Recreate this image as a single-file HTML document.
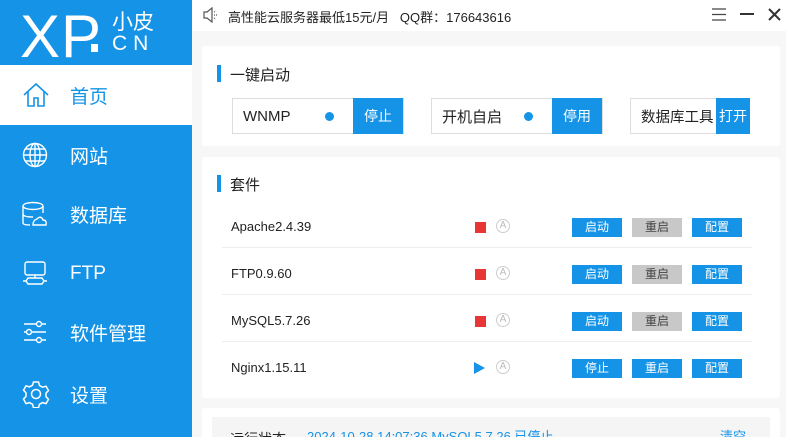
<!DOCTYPE html>
<html><head><meta charset="utf-8"><style>
*{margin:0;padding:0;box-sizing:border-box}
html,body{width:786px;height:437px;overflow:hidden}
body{background:#f7f7f7;font-family:"Liberation Sans","Noto Sans CJK SC",sans-serif;position:relative}
.sb{position:absolute;left:0;top:0;width:192px;height:437px;background:#1593e6;color:#fff}
.abs{position:absolute}
.nav{position:absolute;left:0;width:192px;height:60px;display:flex;align-items:center;font-size:19px;color:#fff}
.nav svg{position:absolute;left:22px}
.nav span{position:absolute;left:70px}
.top{position:absolute;left:192px;top:0;width:594px;height:31px;background:#fff;font-size:13px;color:#222}
.card{position:absolute;background:#fff;border-radius:3px;overflow:hidden}
.ttl{position:absolute;font-size:15px;color:#222}
.ttl:before{content:"";position:absolute;left:-13px;top:1px;width:4px;height:17px;background:#1593e6}
.box{position:absolute;height:36px;border:1px solid #ddd;font-size:15px;color:#222;display:flex;align-items:center;padding-left:10px;background:#fff}
.bb{position:absolute;top:-1px;height:36px;background:#1593e6;color:#fff;font-size:14px;display:flex;align-items:center;justify-content:center}
.dot{position:absolute;width:9px;height:9px;border-radius:50%;background:#1593e6;top:13px}
.row{position:absolute;left:222px;width:530px;height:47px;font-size:13px;color:#222}
.row .n{position:absolute;left:9px;top:15px}
.btn{position:absolute;top:14px;width:50px;height:19px;font-size:12px;color:#fff;background:#1593e6;text-align:center;line-height:19px}
.g{background:#c8c8c8;color:#444}
.sq{position:absolute;left:253px;top:18px;width:11px;height:11px;background:#e83636}
.a{position:absolute;left:274px;top:15px;width:14px;height:14px;border:1px solid #ccc;border-radius:50%;font-size:10px;color:#bbb;text-align:center;line-height:12px}
.line{position:absolute;left:222px;width:530px;height:1px;background:#eee}
</style></head><body>
<div class="sb">
 <div class="abs" style="left:20px;top:4px;font-size:60px;letter-spacing:1px;line-height:66px">XP</div>
 <div class="abs" style="left:91px;top:44px;width:7px;height:8px;background:#fff"></div>
 <div class="abs" style="left:112px;top:6px;font-size:21px">小皮</div>
 <div class="abs" style="left:112px;top:32px;font-size:21px;letter-spacing:6px">CN</div>
 <div class="nav" style="top:65px;height:60px;background:#fff;color:#1593e6"><svg width="28" height="28" viewBox="0 0 28 28" fill="none" stroke="#1593e6" stroke-width="1.6"><path d="M2 14 L14 3 L26 14 M6 11 V25 H12 V17 H16 V25 H22 V11"/></svg><span>首页</span></div>
 <div class="nav" style="top:125px"><svg width="26" height="26" viewBox="0 0 26 26" fill="none" stroke="#fff" stroke-width="1.4"><circle cx="13" cy="13" r="11.5"/><ellipse cx="13" cy="13" rx="5" ry="11.5"/><path d="M13 1.5V24.5M1.5 13H24.5M3 7H23M3 19H23"/></svg><span>网站</span></div>
 <div class="nav" style="top:184px"><svg width="26" height="26" viewBox="0 0 26 26" fill="none" stroke="#fff" stroke-width="1.4"><ellipse cx="11" cy="5" rx="10" ry="3.5"/><path d="M1 5V22Q1 24 8 24M1 13Q1 16 11 16 M21 5V12"/><path d="M11 24H24Q25 19 21 19Q19 14 15 18Q11 19 11 24Z"/></svg><span>数据库</span></div>
 <div class="nav" style="top:244px"><svg width="26" height="26" viewBox="0 0 26 26" fill="none" stroke="#fff" stroke-width="1.4"><rect x="3" y="1" width="20" height="13" rx="2"/><path d="M13 14V17M6 17H20L22 20L20 23H6L4 20Z M1 20H4M22 20H25"/></svg><span>FTP</span></div>
 <div class="nav" style="top:302px"><svg width="26" height="26" viewBox="0 0 26 26" fill="none" stroke="#fff" stroke-width="1.4"><path d="M2 5H14M20 5H24M2 13H4M10 13H24M2 21H14M20 21H24"/><circle cx="17" cy="5" r="2.5"/><circle cx="7" cy="13" r="2.5"/><circle cx="17" cy="21" r="2.5"/></svg><span>软件管理</span></div>
 <div class="nav" style="top:364px"><svg width="28" height="28" viewBox="0 0 28 28" fill="none" stroke="#fff" stroke-width="1.5"><path d="M11.5 2h5l1 3.5 3 1.7 3.5-1 2.5 4.3-2.5 2.6v3.6l2.5 2.6-2.5 4.3-3.5-1-3 1.7-1 3.5h-5l-1-3.5-3-1.7-3.5 1L1.5 19l2.5-2.6v-3.6L1.5 10.2 4 5.9l3.5 1 3-1.7z"/><circle cx="14" cy="14" r="4.5"/></svg><span>设置</span></div>
</div>
<div class="top">
 <svg class="abs" style="left:10px;top:7px" width="16" height="16" viewBox="0 0 16 16" fill="none" stroke="#555" stroke-width="1.2"><path d="M2 5H5L10 1V15L5 11H2Z"/><path d="M12 5L14 4M12 8H15M12 11L14 12" stroke-dasharray="1 1"/></svg>
 <div class="abs" style="left:36px;top:7px">高性能云服务器最低15元/月&nbsp;&nbsp;&nbsp;QQ群：176643616</div>
 <svg class="abs" style="left:520px;top:8px" width="14" height="13" viewBox="0 0 14 13" stroke="#444" stroke-width="1.2"><path d="M0 1H14M0 6.5H14M0 12H14"/></svg>
 <div class="abs" style="left:548px;top:13px;width:14px;height:2px;background:#333"></div>
 <svg class="abs" style="left:576px;top:8px" width="13" height="13" viewBox="0 0 13 13" stroke="#333" stroke-width="2"><path d="M1 1L12 12M12 1L1 12"/></svg>
</div>
<div class="card" style="left:202px;top:46px;width:578px;height:100px">
 <div class="ttl" style="left:28px;top:18px">一键启动</div>
 <div class="box" style="left:30px;top:52px;width:172px">WNMP<div class="dot" style="left:92px"></div><div class="bb" style="left:120px;width:50px">停止</div></div>
 <div class="box" style="left:229px;top:52px;width:172px">开机自启<div class="dot" style="left:92px"></div><div class="bb" style="left:120px;width:50px">停用</div></div>
 <div class="box" style="left:428px;top:52px;width:120px;padding-left:10px;font-size:14.5px">数据库工具<div class="bb" style="left:85px;width:34px">打开</div></div>
</div>
<div class="card" style="left:202px;top:157px;width:578px;height:241px">
 <div class="ttl" style="left:28px;top:17px">套件</div>
</div>
<div class="row" style="top:204px"><div class="n">Apache2.4.39</div><div class="sq"></div><div class="a">A</div><div class="btn" style="left:350px">启动</div><div class="btn g" style="left:410px">重启</div><div class="btn" style="left:470px">配置</div></div>
<div class="line" style="top:247px"></div>
<div class="row" style="top:251px"><div class="n">FTP0.9.60</div><div class="sq"></div><div class="a">A</div><div class="btn" style="left:350px">启动</div><div class="btn g" style="left:410px">重启</div><div class="btn" style="left:470px">配置</div></div>
<div class="line" style="top:294px"></div>
<div class="row" style="top:298px"><div class="n">MySQL5.7.26</div><div class="sq"></div><div class="a">A</div><div class="btn" style="left:350px">启动</div><div class="btn g" style="left:410px">重启</div><div class="btn" style="left:470px">配置</div></div>
<div class="line" style="top:341px"></div>
<div class="row" style="top:345px"><div class="n">Nginx1.15.11</div><svg class="abs" style="left:252px;top:17px" width="11" height="12"><path d="M0 0L11 6L0 12Z" fill="#1593e6"/></svg><div class="a">A</div><div class="btn" style="left:350px">停止</div><div class="btn" style="left:410px">重启</div><div class="btn" style="left:470px">配置</div></div>
<div class="card" style="left:202px;top:408px;width:578px;height:29px;border-radius:3px 3px 0 0">
 <div class="abs" style="left:10px;top:9px;width:558px;height:40px;background:#f5f5f5"></div>
 <div class="abs" style="left:28px;top:21px;font-size:14px;color:#222">运行状态</div>
 <div class="abs" style="left:105px;top:18px;font-size:13px;color:#1593e6">2024-10-28 14:07:36 MySQL5.7.26 已停止</div>
 <div class="abs" style="left:518px;top:18px;font-size:13px;color:#1593e6">清空</div>
</div>
</body></html>
